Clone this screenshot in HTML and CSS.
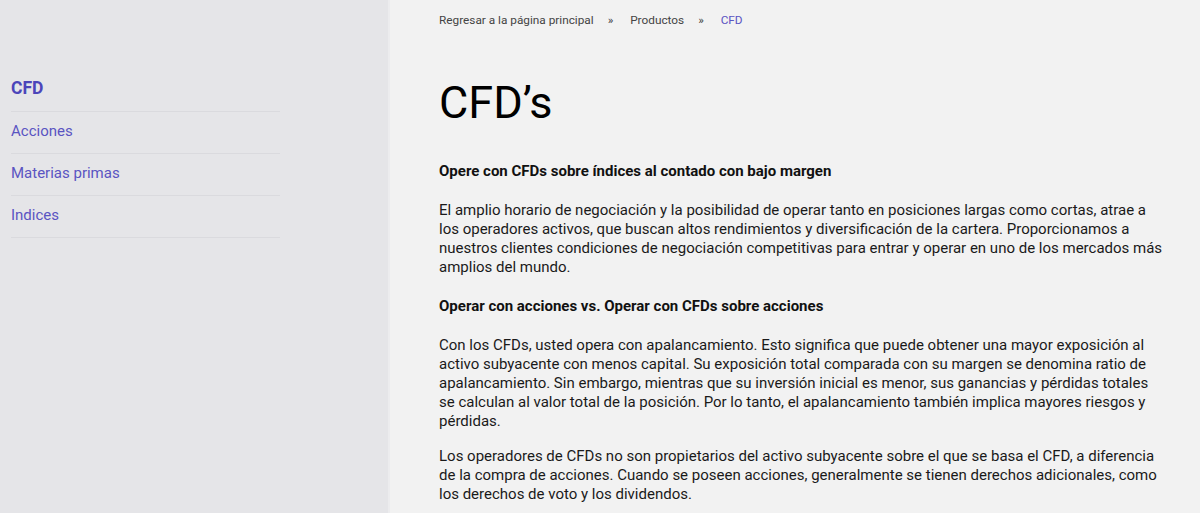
FILE: index.html
```html
<!DOCTYPE html>
<html lang="es">
<head>
<meta charset="utf-8">
<title>CFD's</title>
<link rel="stylesheet" href="styles.css">
</head>
<body>
<div class="page">
  <aside class="sidebar">
    <nav class="side-nav">
      <a class="side-link active" href="#">CFD</a>
      <a class="side-link" href="#">Acciones</a>
      <a class="side-link" href="#">Materias primas</a>
      <a class="side-link" href="#">Indices</a>
    </nav>
  </aside>
  <main class="content">
    <div class="breadcrumb">
      <a href="#">Regresar a la página principal</a>
      <span class="sep">»</span>
      <a href="#">Productos</a>
      <span class="sep">»</span>
      <span class="current">CFD</span>
    </div>
    <h1 class="title">CFD’s</h1>
    <div class="article">
      <h2 class="subhead">Opere con CFDs sobre índices al contado con bajo margen</h2>
      <p>El amplio horario de negociación y la posibilidad de operar tanto en posiciones largas como cortas, atrae a los operadores activos, que buscan altos rendimientos y diversificación de la cartera. Proporcionamos a nuestros clientes condiciones de negociación competitivas para entrar y operar en uno de los mercados más amplios del mundo.</p>
      <h2 class="subhead">Operar con acciones vs. Operar con CFDs sobre acciones</h2>
      <p>Con los CFDs, usted opera con apalancamiento. Esto significa que puede obtener una mayor exposición al activo subyacente con menos capital. Su exposición total comparada con su margen se denomina ratio de apalancamiento. Sin embargo, mientras que su inversión inicial es menor, sus ganancias y pérdidas totales se calculan al valor total de la posición. Por lo tanto, el apalancamiento también implica mayores riesgos y pérdidas.</p>
      <p>Los operadores de CFDs no son propietarios del activo subyacente sobre el que se basa el CFD, a diferencia de la compra de acciones. Cuando se poseen acciones, generalmente se tienen derechos adicionales, como los derechos de voto y los dividendos.</p>
    </div>
  </main>
</div>
</body>
</html>
```
FILE: styles.css
```css
* { box-sizing: border-box; }
html, body { margin: 0; padding: 0; }
body {
  font-family: Roboto, "Liberation Sans", Arial, sans-serif;
  background: #f2f2f2;
  color: #1a1a1a;
  height: 513px;
  overflow: hidden;
}
.page {
  display: flex;
  min-height: 513px;
}
.sidebar {
  width: 390px;
  flex: 0 0 390px;
  background: #e5e5e8;
  border-right: 2px solid #ececee;
  padding: 70px 0 0 11px;
}
.side-nav {
  width: 269px;
  display: flex;
  flex-direction: column;
}
.side-link {
  display: block;
  color: #5a54c2;
  text-decoration: none;
  font-size: 15px;
  line-height: 20px;
  padding: 9px 0 12px;
  border-bottom: 1px solid #dadade;
}
.side-link.active {
  font-size: 17.5px;
  font-weight: 700;
  color: #4c45ba;
  line-height: 22px;
  padding: 7px 0 12px;
}
.content {
  flex: 1;
  padding: 12px 0 0 49px;
}
.breadcrumb {
  font-size: 11.8px;
  line-height: 16px;
  color: #444;
  display: flex;
}
.breadcrumb a { color: #444; text-decoration: none; }
.breadcrumb .sep { margin: 0 17px 0 14px; color: #444; }
.breadcrumb .current { color: #5a54c2; }
.title {
  margin: 49px 0 0;
  font-size: 45px;
  font-weight: 400;
  line-height: 52px;
  color: #000;
}
.article {
  width: 728px;
  padding-top: 33px;
}
.subhead {
  font-size: 15px;
  font-weight: 700;
  line-height: 19px;
  margin: 0 0 20px;
  color: #111;
}
.article p {
  font-size: 15px;
  line-height: 19px;
  margin: 0 0 16px;
  color: #1a1a1a;
}
.article p + .subhead { margin-top: 20px; }
```
